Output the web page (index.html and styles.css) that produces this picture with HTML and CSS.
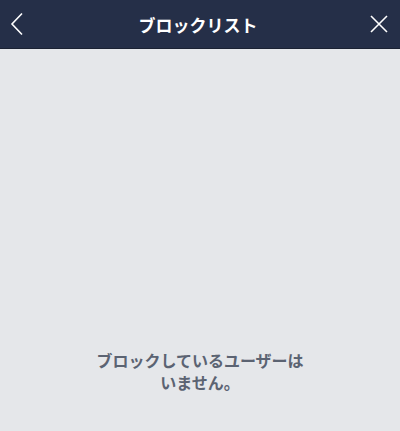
FILE: index.html
```html
<!DOCTYPE html>
<html lang="ja">
<head>
  <meta charset="UTF-8">
  <title>ブロックリスト</title>
  <link rel="stylesheet" href="styles.css">
</head>
<body>

<header class="topbar">
  <button class="icon-btn" aria-label="戻る">
    <svg width="14" height="24" viewBox="0 0 14 24"><path d="M12 1.5 L2 12 L12 22.5" fill="none" stroke="#fff" stroke-width="1.6"/></svg>
  </button>
  <h1 class="title">ブロックリスト</h1>
  <button class="icon-btn" aria-label="閉じる">
    <svg width="20" height="20" viewBox="0 0 20 20"><path d="M2 2 L18 18 M18 2 L2 18" fill="none" stroke="#fff" stroke-width="1.6"/></svg>
  </button>
</header>

<main class="content">
  <p class="empty">ブロックしているユーザーは<br>いません。</p>
</main>

</body>
</html>
```

FILE: styles.css
```css
* {
  box-sizing: border-box;
}
body {
  margin: 0;
  font-family: "Noto Sans CJK JP", "Noto Sans", sans-serif;
  background-color: #e5e7ea;
  width: 400px;
  height: 431px;
  overflow: hidden;
}
.topbar {
  height: 49px;
  background-color: #252f48;
  display: flex;
  align-items: center;
  justify-content: space-between;
  padding: 0 9px 0 5px;
  border-bottom: 1px solid #1b2233;
}
.icon-btn {
  background: none;
  border: none;
  padding: 0;
  width: 24px;
  height: 24px;
  display: flex;
  align-items: center;
  justify-content: center;
}
.title {
  margin: 0;
  color: #fff;
  font-size: 17px;
  font-weight: bold;
}
.content {
  height: 382px;
  display: flex;
  flex-direction: column;
  justify-content: flex-end;
  align-items: center;
  padding-bottom: 38px;
}
.empty {
  margin: 0;
  color: #5b6372;
  font-size: 16px;
  font-weight: bold;
  line-height: 22px;
  text-align: center;
}
```
